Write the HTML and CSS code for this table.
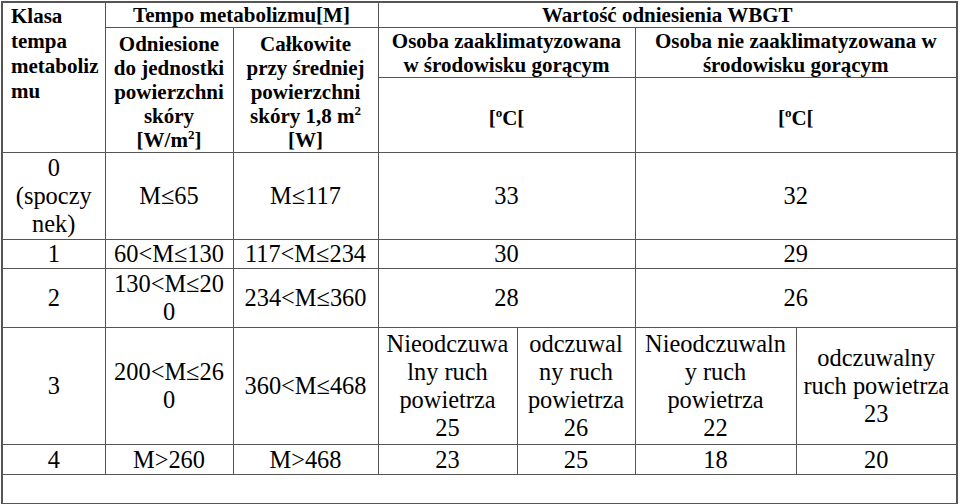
FILE: index.html
```html
<!DOCTYPE html>
<html lang="pl">
<head>
<meta charset="utf-8">
<title>Tempo metabolizmu</title>
<link rel="stylesheet" href="styles.css">
</head>
<body>
<table class="tbl">
  <colgroup>
    <col class="c1"><col class="c2"><col class="c3"><col class="c4"><col class="c5"><col class="c6"><col class="c7">
  </colgroup>
  <tr class="r1">
    <td class="h klasa" rowspan="3">Klasa<br>tempa<br>metaboliz<br>mu</td>
    <td class="h" colspan="2">Tempo metabolizmu[M]</td>
    <td class="h" colspan="4">Wartość odniesienia WBGT</td>
  </tr>
  <tr class="r2">
    <td class="h top" rowspan="2">Odniesione<br>do jednostki<br>powierzchni<br>skóry<br>[W/m<span class="sup">2</span>]</td>
    <td class="h top" rowspan="2">Całkowite<br>przy średniej<br>powierzchni<br>skóry 1,8 m<span class="sup">2</span><br>[W]</td>
    <td class="h" colspan="2">Osoba zaaklimatyzowana<br>w środowisku gorącym</td>
    <td class="h" colspan="2">Osoba nie zaaklimatyzowana w<br>środowisku gorącym</td>
  </tr>
  <tr class="r3">
    <td class="h unit" colspan="2">[<span class="sup">o</span>C[</td>
    <td class="h unit" colspan="2">[<span class="sup">o</span>C[</td>
  </tr>
  <tr class="r4">
    <td>0<br>(spoczy<br>nek)</td>
    <td>M≤65</td>
    <td>M≤117</td>
    <td colspan="2">33</td>
    <td colspan="2">32</td>
  </tr>
  <tr class="r5">
    <td>1</td>
    <td>60&lt;M≤130</td>
    <td>117&lt;M≤234</td>
    <td colspan="2">30</td>
    <td colspan="2">29</td>
  </tr>
  <tr class="r6">
    <td>2</td>
    <td>130&lt;M≤20<br>0</td>
    <td>234&lt;M≤360</td>
    <td colspan="2">28</td>
    <td colspan="2">26</td>
  </tr>
  <tr class="r7">
    <td>3</td>
    <td>200&lt;M≤26<br>0</td>
    <td>360&lt;M≤468</td>
    <td>Nieodczuwa<br>lny ruch<br>powietrza<br>25</td>
    <td>odczuwal<br>ny ruch<br>powietrza<br>26</td>
    <td>Nieodczuwaln<br>y ruch<br>powietrza<br>22</td>
    <td>odczuwalny<br>ruch powietrza<br>23</td>
  </tr>
  <tr class="r8">
    <td>4</td>
    <td>M&gt;260</td>
    <td>M&gt;468</td>
    <td>23</td>
    <td>25</td>
    <td>18</td>
    <td>20</td>
  </tr>
  <tr class="r9">
    <td colspan="7"></td>
  </tr>
</table>
</body>
</html>
```
FILE: styles.css
```css
html, body {
  margin: 0;
  padding: 0;
  background: #fff;
}

body {
  padding: 1px 0 0 1px;
  font-family: "Liberation Serif", "Times New Roman", serif;
  color: #000;
}

.tbl {
  border-collapse: collapse;
  table-layout: fixed;
  width: 956px;
  border: 2px solid #555;
  font-family: "Liberation Serif", "Times New Roman", serif;
}

.c1 { width: 103px; }
.c2 { width: 128px; }
.c3 { width: 145px; }
.c4 { width: 139px; }
.c5 { width: 118px; }
.c6 { width: 161px; }
.c7 { width: 161px; }

.tbl td {
  border: 1px solid #555;
  padding: 0;
  text-align: center;
  vertical-align: middle;
  font-size: 24.4px;
  line-height: 28px;
  white-space: nowrap;
  overflow: hidden;
}

.tbl td.h {
  font-weight: bold;
  font-size: 21px;
  line-height: 24px;
}

.tbl td.top {
  vertical-align: top;
  padding-top: 4px;
}

.tbl td.klasa {
  text-align: left;
  vertical-align: top;
  padding: 1px 0 0 8px;
  line-height: 25px;
}

.tbl td.unit {
  padding-top: 5px;
}

.sup {
  font-size: 0.62em;
  line-height: 0;
  vertical-align: 0.6em;
}

.r1 { height: 25px; }
.r2 { height: 50px; }
.r3 { height: 74px; }
.r4 { height: 87px; }
.r5 { height: 29px; }
.r6 { height: 59px; }
.r7 { height: 117px; }
.r8 { height: 30px; }
.r9 { height: 29px; }
```
